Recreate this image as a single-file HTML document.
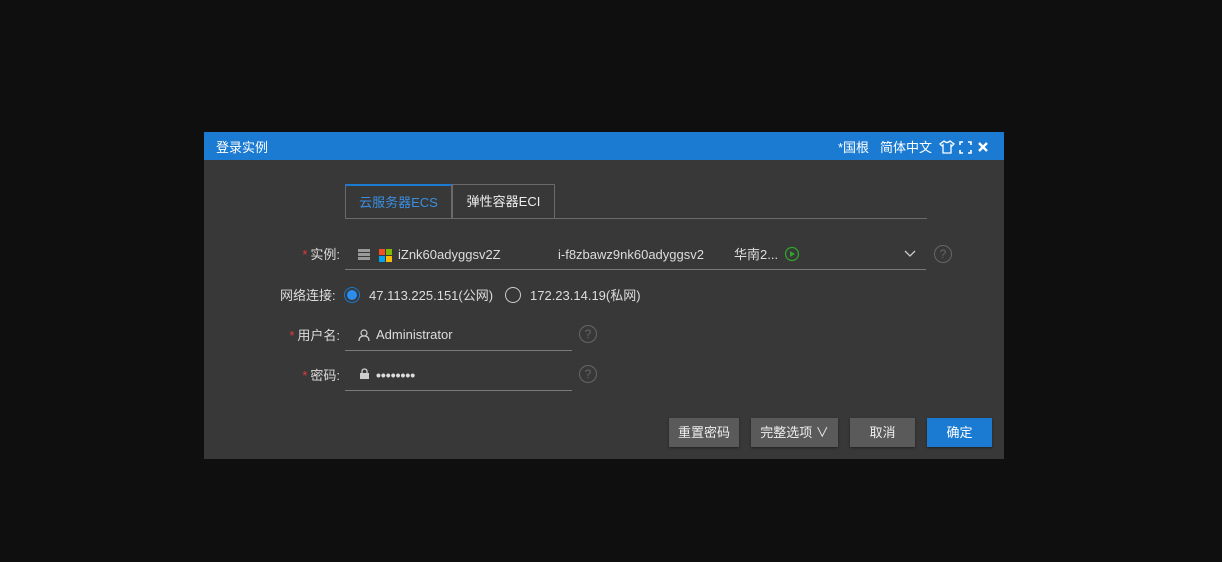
<!DOCTYPE html>
<html><head><meta charset="utf-8"><style>
body{margin:0;width:1222px;height:562px;background:#0f0f0f;font-family:"Liberation Sans","Noto Sans CJK SC",sans-serif;font-size:13px;color:#ddd;position:relative;overflow:hidden}
.a{position:absolute;line-height:16px}
.dlg{left:204px;top:132px;width:800px;height:327px;background:#383838}
.hd{left:0;top:0;width:800px;height:28px;background:#1b7ad2;color:#fff}
.lbl{text-align:right;width:120px}
.st{color:#e23b3b;margin-right:3px}
.line{height:1px;background:#7a7a7a}
.q{width:16px;height:16px;border:1px solid #666;border-radius:50%;color:#666;font-size:12px;text-align:center;line-height:16px}
.btn{top:286px;height:29px;background:#5a5a5a;color:#eee;text-align:center;line-height:29px;box-shadow:0 1px 2px #222}
</style></head><body>
<div class="a dlg">
 <div class="a hd">
  <div class="a" style="left:12px;top:8px">登录实例</div>
  <div class="a" style="left:634px;top:8px">*国根</div>
  <div class="a" style="left:676px;top:8px">简体中文</div>
  <svg class="a" style="left:735px;top:8px" width="16" height="14" viewBox="0 0 16 14"><path d="M5 1 L1 4 L3 6 L4 5 V13 H12 V5 L13 6 L15 4 L11 1 Q8 4 5 1Z" fill="none" stroke="#fff" stroke-width="1.3"/></svg>
  <svg class="a" style="left:755px;top:9px" width="13" height="13" viewBox="0 0 13 13"><path d="M1 4V1H4M9 1H12V4M12 9V12H9M4 12H1V9" fill="none" stroke="#fff" stroke-width="1.6"/></svg>
  <svg class="a" style="left:773px;top:9px" width="12" height="12" viewBox="0 0 12 12"><path d="M2 2L10 10M10 2L2 10" stroke="#fff" stroke-width="2.4"/></svg>
 </div>
 <div class="a" style="left:141px;top:52px;width:107px;height:34px;border:1px solid #6a6a6a;border-top:2px solid #1b7ad2;border-bottom:none;box-sizing:border-box;color:#3a8fe0;text-align:center;line-height:34px">云服务器ECS</div>
 <div class="a" style="left:248px;top:52px;width:103px;height:34px;border:1px solid #6a6a6a;box-sizing:border-box;border-bottom:none;color:#eee;text-align:center;line-height:33px">弹性容器ECI</div>
 <div class="a line" style="left:141px;top:86px;width:582px;background:#6a6a6a"></div>

 <div class="a lbl" style="left:16px;top:115px"><span class="st">*</span>实例:</div>
 <div class="a" style="left:154px;top:117px;width:12px;height:11px;background:repeating-linear-gradient(#999 0 3px,transparent 3px 4px)"></div>
 <svg class="a" style="left:175px;top:117px" width="13" height="13"><rect x="0" y="0" width="6" height="6" fill="#f25022"/><rect x="7" y="0" width="6" height="6" fill="#7fba00"/><rect x="0" y="7" width="6" height="6" fill="#00a4ef"/><rect x="7" y="7" width="6" height="6" fill="#ffb900"/></svg>
 <div class="a" style="left:194px;top:115px">iZnk60adyggsv2Z</div>
 <div class="a" style="left:354px;top:115px">i-f8zbawz9nk60adyggsv2</div>
 <div class="a" style="left:530px;top:115px">华南2...</div>
 <svg class="a" style="left:580px;top:114px" width="16" height="16"><circle cx="8" cy="8" r="6.5" fill="none" stroke="#2ea32e" stroke-width="1.3"/><path d="M6 5L11 8L6 11Z" fill="#2ea32e"/></svg>
 <svg class="a" style="left:700px;top:118px" width="12" height="8"><path d="M1 1L6 6L11 1" fill="none" stroke="#ccc" stroke-width="1.3"/></svg>
 <div class="a q" style="left:730px;top:113px">?</div>
 <div class="a line" style="left:141px;top:137px;width:581px"></div>

 <div class="a" style="left:76px;top:156px">网络连接:</div>
 <div class="a" style="left:140px;top:155px;width:16px;height:16px;border:1px solid #1b7ad2;border-radius:50%;box-sizing:border-box;padding:2px"><div style="width:100%;height:100%;border-radius:50%;background:#2a8ef0"></div></div>
 <div class="a" style="left:165px;top:156px">47.113.225.151(公网)</div>
 <div class="a" style="left:301px;top:155px;width:16px;height:16px;border:1.3px solid #ccc;border-radius:50%;box-sizing:border-box"></div>
 <div class="a" style="left:326px;top:156px">172.23.14.19(私网)</div>

 <div class="a lbl" style="left:16px;top:196px"><span class="st">*</span>用户名:</div>
 <svg class="a" style="left:154px;top:197px" width="12" height="13"><circle cx="6" cy="4" r="3" fill="none" stroke="#ccc" stroke-width="1.2"/><path d="M1 12Q1 7 6 7Q11 7 11 12" fill="none" stroke="#ccc" stroke-width="1.2"/></svg>
 <div class="a" style="left:172px;top:195px">Administrator</div>
 <div class="a q" style="left:375px;top:193px">?</div>
 <div class="a line" style="left:141px;top:218px;width:227px"></div>

 <div class="a lbl" style="left:16px;top:236px"><span class="st">*</span>密码:</div>
 <svg class="a" style="left:155px;top:236px" width="11" height="12"><path d="M3 5V3.5Q3 1 5.5 1Q8 1 8 3.5V5" fill="none" stroke="#ccc" stroke-width="1.3"/><rect x="1" y="5" width="9" height="6" fill="#ccc"/></svg>
 <div class="a" style="left:172px;top:235px;font-size:14px;font-weight:bold">••••••••</div>
 <div class="a q" style="left:375px;top:233px">?</div>
 <div class="a line" style="left:141px;top:258px;width:227px"></div>

 <div class="a btn" style="left:465px;width:70px">重置密码</div>
 <div class="a btn" style="left:547px;width:87px">完整选项 ∨</div>
 <div class="a btn" style="left:646px;width:65px">取消</div>
 <div class="a btn" style="left:723px;width:65px;background:#1b7ad2;color:#fff">确定</div>
</div>
</body></html>
